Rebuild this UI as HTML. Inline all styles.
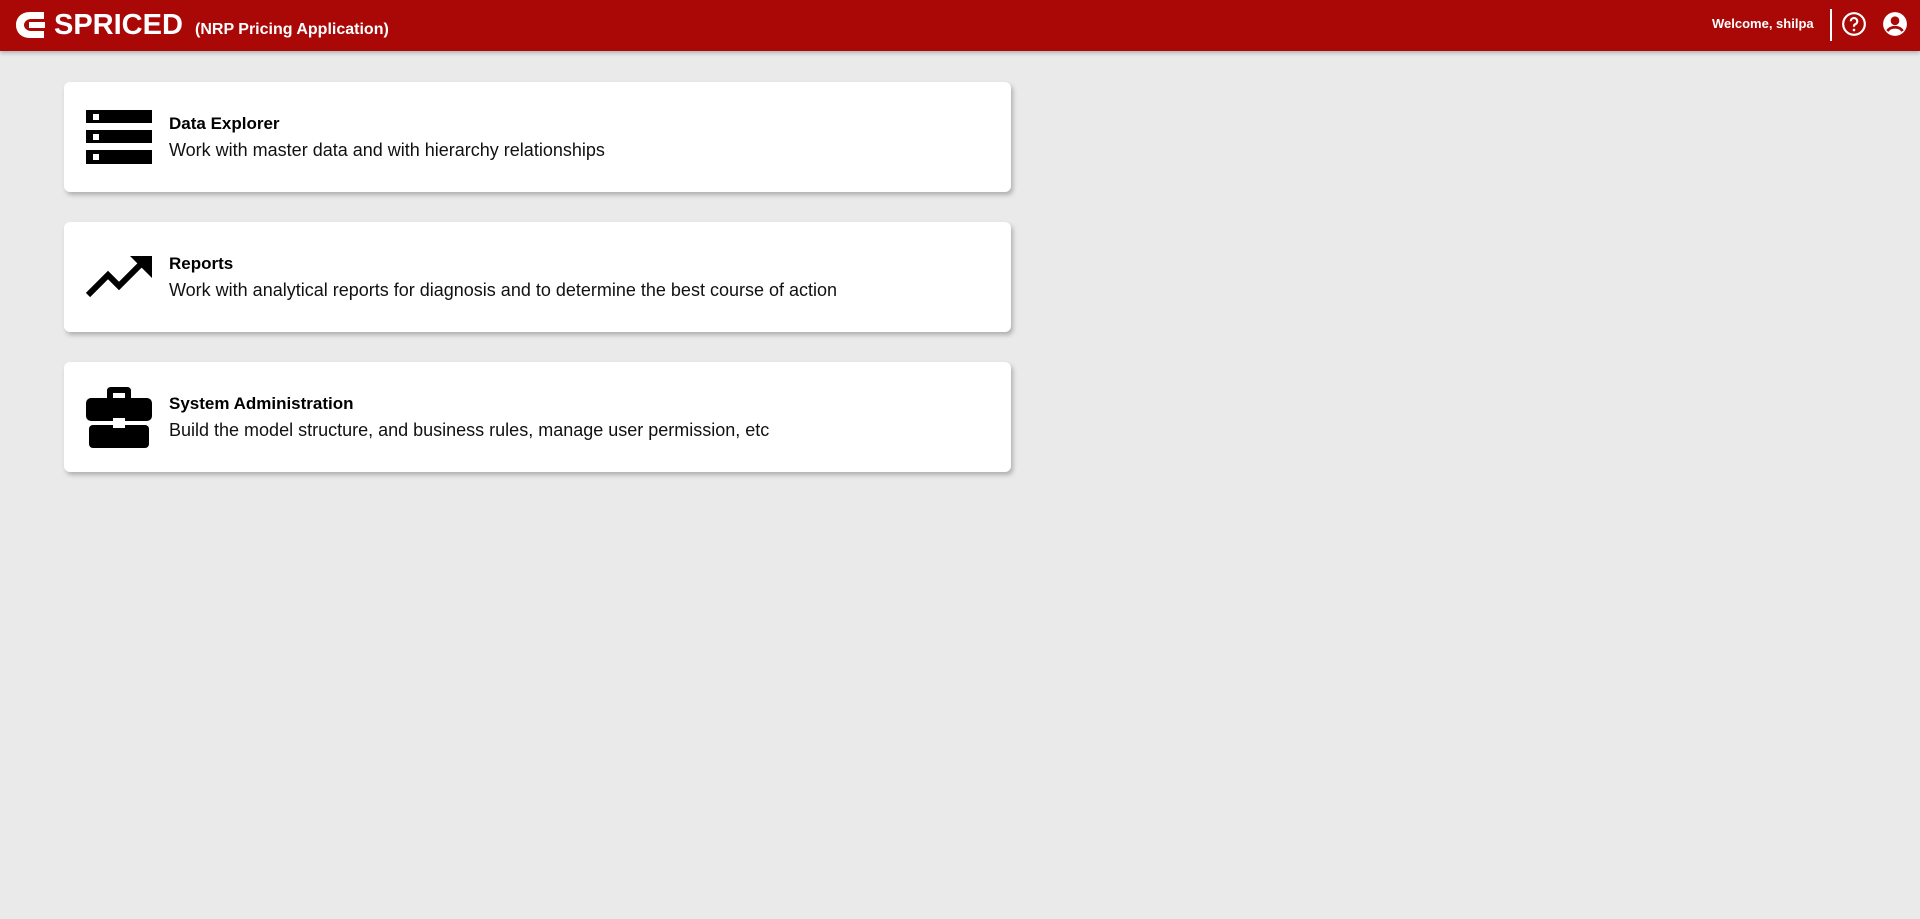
<!DOCTYPE html>
<html><head><meta charset="utf-8"><style>
*{margin:0;padding:0;box-sizing:border-box}
body{width:1920px;height:919px;background:#eaeaea;font-family:"Liberation Sans",Arial,sans-serif;overflow:hidden;position:relative}
.hdr{position:absolute;left:0;top:0;width:1920px;height:51px;background:#aa0707;box-shadow:0 2px 4px rgba(0,0,0,.25);color:#fff}
.card{position:absolute;left:64px;width:947px;height:110px;background:#fff;border-radius:6px;box-shadow:2px 3px 5px rgba(0,0,0,.25)}
.card svg{position:absolute;left:22px}
.t{position:absolute;left:105px;top:32px;font-size:17px;font-weight:bold;color:#000}
.d{position:absolute;left:105px;top:58px;font-size:18px;color:#111}
</style></head><body>
<div class="hdr">
<svg style="position:absolute;left:15px;top:11px" width="30" height="28" viewBox="0 0 30 28"><path d="M15 1 C6 1 1 7 1 14 C1 21 6 27 15 27 L29 27 L29 20 L16 20 C12 20 9 17 9 14 C9 11 12 8 16 8 L29 8 L29 1 Z" fill="#fff"/><rect x="14" y="11" width="16" height="6" fill="#fff"/></svg>
<div style="position:absolute;left:54px;top:9px;font-size:29px;font-weight:bold">SPRICED</div>
<div style="position:absolute;left:195px;top:21px;font-size:16px;font-weight:bold">(NRP Pricing Application)</div>
<div style="position:absolute;left:1712px;top:16px;font-size:13px;font-weight:bold">Welcome, shilpa</div>
<div style="position:absolute;left:1830px;top:9px;width:2px;height:32px;background:#fff"></div>
<svg style="position:absolute;left:1841px;top:11px" width="26" height="26" viewBox="0 0 24 24"><circle cx="12" cy="12" r="10" fill="none" stroke="#fff" stroke-width="2"/><path d="M9 9.5a3 3 0 1 1 4 2.8c-.8.4-1 1-1 1.7v.5" fill="none" stroke="#fff" stroke-width="2"/><circle cx="12" cy="17.5" r="1.2" fill="#fff"/></svg>
<svg style="position:absolute;left:1882px;top:11px" width="26" height="26" viewBox="0 0 24 24"><circle cx="12" cy="12" r="11" fill="#fff"/><circle cx="12" cy="9" r="4" fill="#aa0707"/><path d="M5 18.5c1.5-2.5 4-3.5 7-3.5s5.5 1 7 3.5" fill="none" stroke="#aa0707" stroke-width="2.5"/></svg>
</div>

<div class="card" style="top:82px">
<svg style="top:28px" width="66" height="54" viewBox="0 0 66 54"><rect x="0" y="0" width="66" height="13" fill="#000"/><rect x="0" y="20" width="66" height="13" fill="#000"/><rect x="0" y="40" width="66" height="14" fill="#000"/><rect x="7" y="4" width="6" height="6" fill="#fff"/><rect x="7" y="24" width="6" height="6" fill="#fff"/><rect x="7" y="44" width="6" height="6" fill="#fff"/></svg>
<div class="t">Data Explorer</div><div class="d">Work with master data and with hierarchy relationships</div></div>

<div class="card" style="top:222px">
<svg style="top:34px" width="66" height="42" viewBox="0 0 66 42"><path d="M2 39 L22 19 L33 30 L56 7" fill="none" stroke="#000" stroke-width="6"/><path d="M44 0 L66 0 L66 22 Z" fill="#000"/></svg>
<div class="t">Reports</div><div class="d">Work with analytical reports for diagnosis and to determine the best course of action</div></div>

<div class="card" style="top:362px">
<svg style="top:25px" width="66" height="61" viewBox="0 0 66 61"><path d="M25 0 H41 Q45 0 45 4 V11 H39 V6 H27 V11 H21 V4 Q21 0 25 0Z" fill="#000"/><rect x="0" y="11" width="66" height="23" rx="5" fill="#000"/><rect x="3" y="38" width="60" height="23" rx="4" fill="#000"/><rect x="27" y="31" width="12" height="10" fill="#fff"/><rect x="0" y="34" width="66" height="4" fill="#fff"/><rect x="27" y="31" width="12" height="10" fill="#fff"/></svg>
<div class="t">System Administration</div><div class="d">Build the model structure, and business rules, manage user permission, etc</div></div>
</body></html>
